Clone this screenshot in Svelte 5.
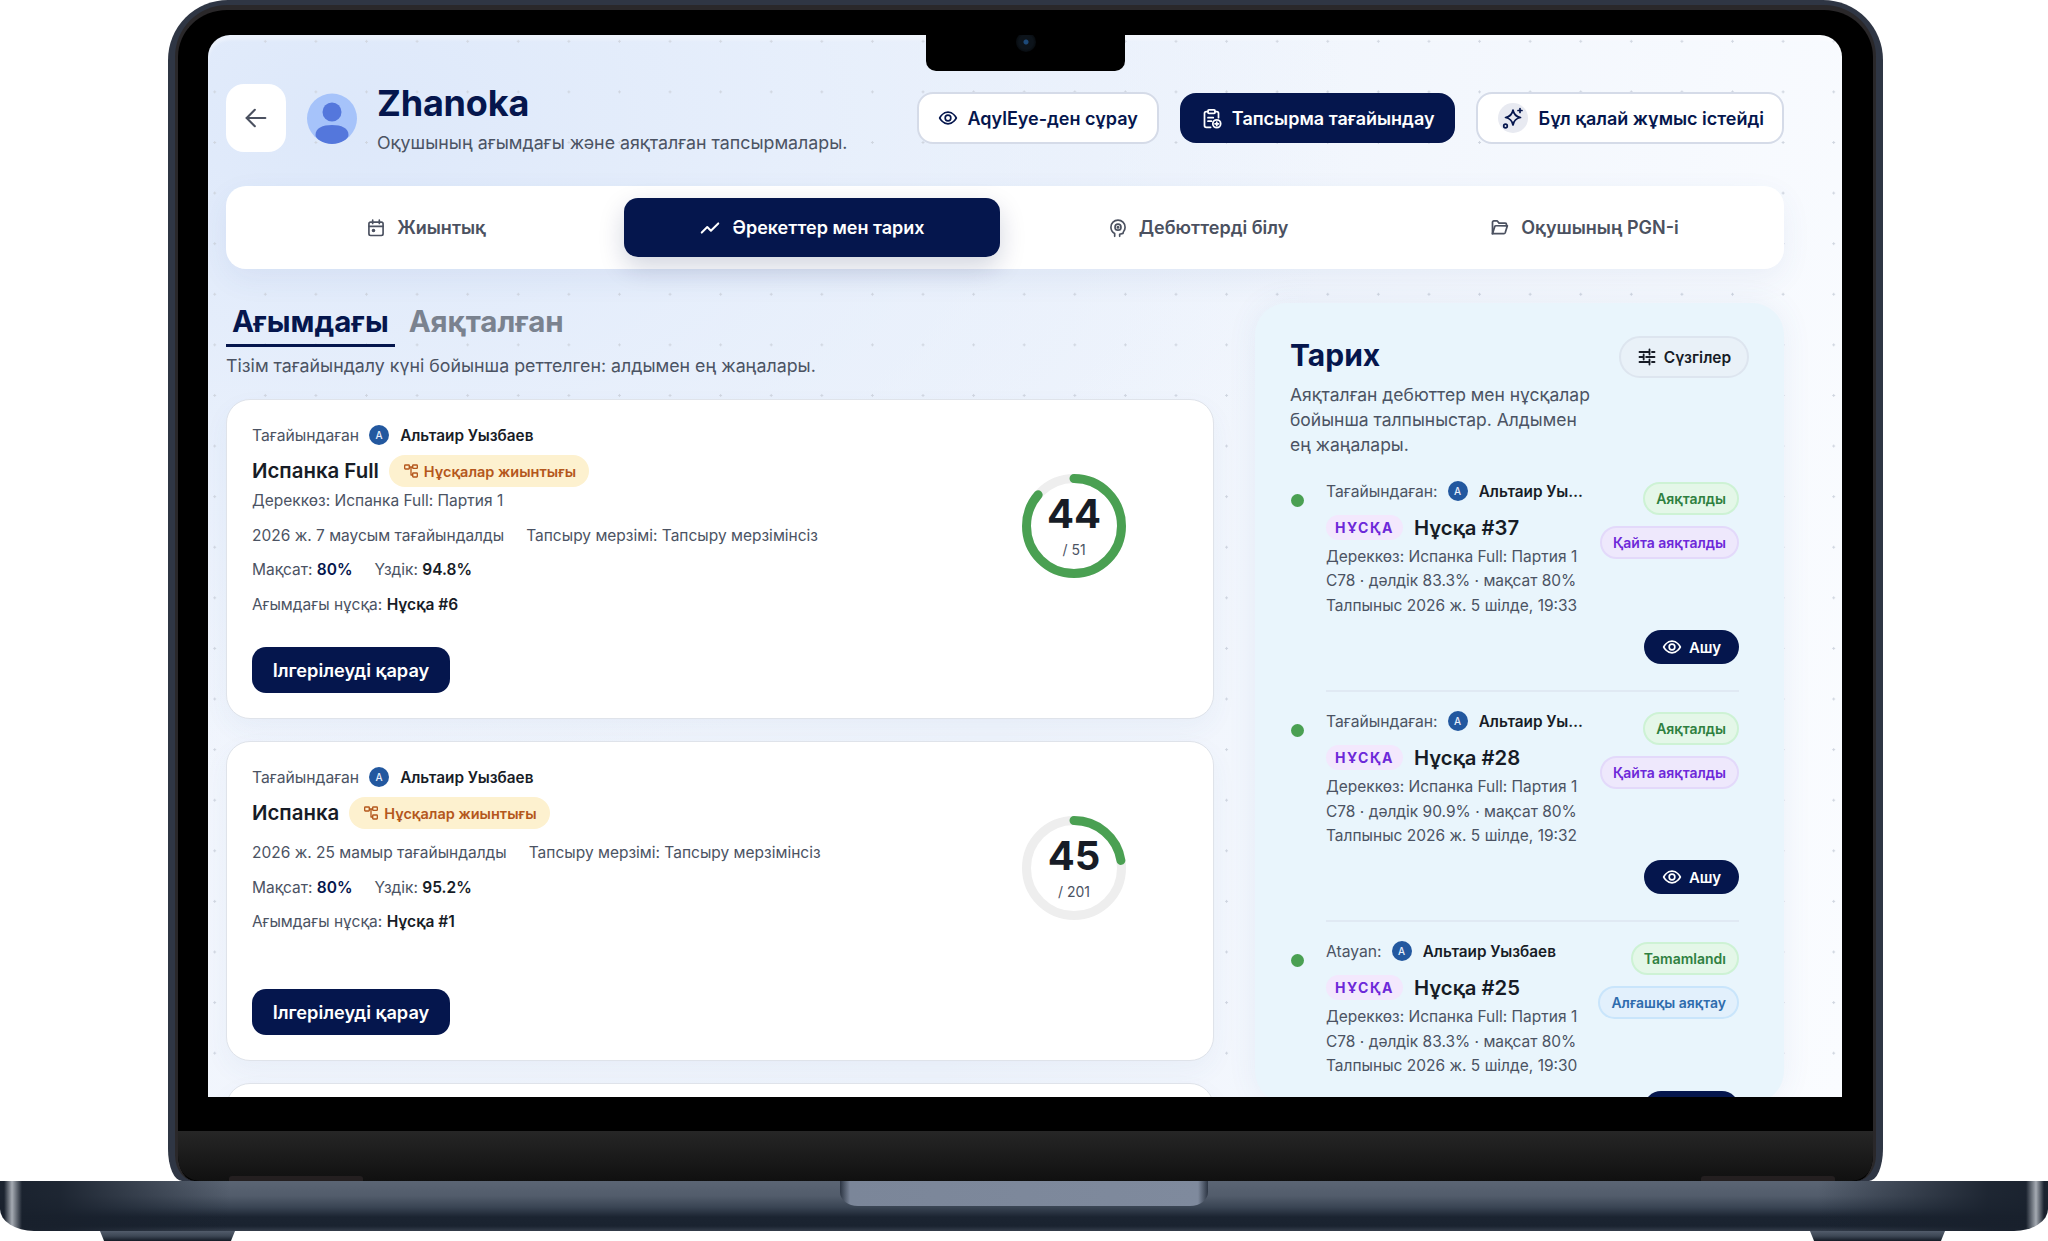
<script>
  const history = [
    { who: 'Тағайындаған:', name: 'Альтаир Уызбаев', title: 'Нұсқа #37', acc: '83.3%', time: '19:33', status: 'Аяқталды', kind: 'Қайта аяқталды', kindClass: 'violet' },
    { who: 'Тағайындаған:', name: 'Альтаир Уызбаев', title: 'Нұсқа #28', acc: '90.9%', time: '19:32', status: 'Аяқталды', kind: 'Қайта аяқталды', kindClass: 'violet' },
    { who: 'Atayan:', name: 'Альтаир Уызбаев', title: 'Нұсқа #25', acc: '83.3%', time: '19:30', status: 'Tamamlandı', kind: 'Алғашқы аяқтау', kindClass: 'blue' }
  ];
  const R = 47.5;
  const C = 2 * Math.PI * R;
  const cards = [
    { title: 'Испанка Full', source: 'Дереккөз: Испанка Full: Партия 1', date: '2026 ж. 7 маусым тағайындалды', best: '94.8%', cur: 'Нұсқа #6', done: 44, total: 51 },
    { title: 'Испанка', source: '', date: '2026 ж. 25 мамыр тағайындалды', best: '95.2%', cur: 'Нұсқа #1', done: 45, total: 201 }
  ];
</script>

{#snippet eye(size)}
  <svg width={size} height={size} viewBox="0 0 24 24" fill="none" stroke="currentColor" stroke-width="2" stroke-linecap="round" stroke-linejoin="round"><path d="M2 12s3.6-7 10-7 10 7 10 7-3.6 7-10 7-10-7-10-7Z"/><circle cx="12" cy="12" r="3.4"/></svg>
{/snippet}

<div class="stage">
  <div class="lid">
    <div class="bezel">
      <div class="glass">
        <div class="screen">
          <header class="head">
            <button class="back" aria-label="back">
              <svg width="28" height="28" viewBox="0 0 24 24" fill="none" stroke="currentColor" stroke-width="1.8" stroke-linecap="round" stroke-linejoin="round"><path d="M20 12H4"/><path d="M11 5l-7 7 7 7"/></svg>
            </button>
            <div class="avatar">
              <svg width="50" height="51" viewBox="0 0 50 51"><circle cx="25" cy="25.500" r="25" fill="#a6c3fa"/><circle cx="25" cy="19" r="9.500" fill="#5477dc"/><path d="M8.500 42c0-7 7-10 16.500-10s16.500 3 16.500 10c0 3.500-7 9-16.500 9S8.500 45.500 8.500 42Z" fill="#5477dc"/></svg>
            </div>
            <div class="who">
              <h1>Zhanoka</h1>
              <p>Оқушының ағымдағы және аяқталған тапсырмалары.</p>
            </div>
            <div class="actions">
              <button class="act light">{@render eye(20)}AqylEye-ден сұрау</button>
              <button class="act dark">
                <svg width="21" height="21" viewBox="0 0 24 24" fill="none" stroke="currentColor" stroke-width="2" stroke-linecap="round" stroke-linejoin="round"><rect x="8" y="2" width="8" height="4" rx="1"/><path d="M16 4h2a2 2 0 0 1 2 2v5"/><path d="M11 22H6a2 2 0 0 1-2-2V6a2 2 0 0 1 2-2h2"/><path d="M8 11h6M8 15h4"/><circle cx="18" cy="18" r="4.500"/><path d="M18 16v4M16 18h4"/></svg>
                Тапсырма тағайындау
              </button>
              <button class="act light wide">
                <span class="spark">
                  <svg width="24" height="24" viewBox="0 0 24 24" fill="none" stroke="currentColor" stroke-width="1.700" stroke-linecap="round" stroke-linejoin="round"><path d="M12 4c.8 4.600 2.900 6.700 7.500 7.500-4.600.8-6.700 2.900-7.500 7.500-.8-4.600-2.900-6.700-7.500-7.500C9.100 10.700 11.200 8.600 12 4Z"/><path d="M19 2.500v4M17 4.500h4"/><circle cx="4.500" cy="20" r="1.800"/></svg>
                </span>
                Бұл қалай жұмыс істейді
              </button>
            </div>
          </header>

          <nav class="tabs">
            <div class="tab">
              <svg width="20" height="20" viewBox="0 0 24 24" fill="none" stroke="currentColor" stroke-width="2" stroke-linecap="round" stroke-linejoin="round"><rect x="3.500" y="5" width="17" height="16" rx="2"/><path d="M8 2.500v4M16 2.500v4M3.500 10h17"/><circle cx="9" cy="15" r="1.200" fill="currentColor"/></svg>
              Жиынтық
            </div>
            <div class="tab on">
              <svg width="22" height="22" viewBox="0 0 24 24" fill="none" stroke="currentColor" stroke-width="2.200" stroke-linecap="round" stroke-linejoin="round"><path d="M3 17l6-6 4 4 8-8"/></svg>
              Әрекеттер мен тарих
            </div>
            <div class="tab">
              <svg width="20" height="20" viewBox="0 0 24 24" fill="none" stroke="currentColor" stroke-width="2" stroke-linecap="round" stroke-linejoin="round"><path d="M8 22v-3.500C5.300 17 3.500 14.300 3.500 11a8.500 8.500 0 0 1 17 0c0 1.800-.6 3.400-1.500 4.800-.7 1.100-1 1.900-1 2.700L14 19.500V22"/><circle cx="12" cy="11" r="3.600"/><circle cx="12" cy="11" r=".8" fill="currentColor"/></svg>
              Дебюттерді білу
            </div>
            <div class="tab">
              <svg width="21" height="21" viewBox="0 0 24 24" fill="none" stroke="currentColor" stroke-width="2" stroke-linecap="round" stroke-linejoin="round"><path d="M4 19V6a1.500 1.500 0 0 1 1.500-1.500H9.500l2 2.500h7A1.500 1.500 0 0 1 20 8.500V10"/><path d="M4 19l2.500-8a1.500 1.500 0 0 1 1.400-1H21l-2.500 8a1.500 1.500 0 0 1-1.400 1H4Z"/></svg>
              Оқушының PGN-і
            </div>
          </nav>

          <main class="main">
            <section class="left">
              <div class="subtabs">
                <span class="sub on">Ағымдағы</span>
                <span class="sub">Аяқталған</span>
              </div>
              <p class="lead">Тізім тағайындалу күні бойынша реттелген: алдымен ең жаңалары.</p>

              {#each cards as c}
                <article class="card">
                  <div class="info">
                    <div class="by">
                      <span>Тағайындаған</span><span class="ava">A</span><b>Альтаир Уызбаев</b>
                    </div>
                    <div class="titleRow">
                      <h3>{c.title}</h3>
                      <span class="set">
                        <svg width="16" height="16" viewBox="0 0 24 24" fill="none" stroke="currentColor" stroke-width="2" stroke-linecap="round" stroke-linejoin="round"><rect x="2.500" y="3" width="7" height="6" rx="1"/><rect x="14.500" y="3" width="7" height="5" rx="1"/><rect x="14.500" y="15" width="7" height="6" rx="1"/><path d="M9.500 6h5M12 6v12h2.500"/></svg>
                        Нұсқалар жиынтығы
                      </span>
                    </div>
                    {#if c.source}<div class="src">{c.source}</div>{/if}
                    <div class="meta"><span>{c.date}</span><span>Тапсыру мерзімі: Тапсыру мерзімінсіз</span></div>
                    <div class="meta"><span>Мақсат: <b class="navy">80%</b></span><span>Үздік: <b>{c.best}</b></span></div>
                    <div class="meta"><span>Ағымдағы нұсқа: <b>{c.cur}</b></span></div>
                    <button class="go">Ілгерілеуді қарау</button>
                  </div>
                  <div class="ring">
                    <svg width="104" height="104" viewBox="0 0 104 104">
                      <circle cx="52" cy="52" r={R} fill="none" stroke="#eeeeee" stroke-width="9"/>
                      <circle cx="52" cy="52" r={R} fill="none" stroke="#4aa052" stroke-width="9" stroke-linecap="round" stroke-dasharray="{C * c.done / c.total} {C}" transform="rotate(-90 52 52)"/>
                    </svg>
                    <div class="num"><strong>{c.done}</strong><small>/ {c.total}</small></div>
                  </div>
                </article>
              {/each}
              <article class="card"></article>
            </section>

            <aside class="panel">
              <div class="panelHead">
                <h2>Тарих</h2>
                <button class="filter">
                  <svg width="20" height="20" viewBox="0 0 24 24" fill="none" stroke="currentColor" stroke-width="2.200" stroke-linecap="round"><path d="M3 6h11M18 6h3M15 3v6M3 12h4M11 12h10M8 9v6M3 18h11M18 18h3M15 15v6"/></svg>
                  Сүзгілер
                </button>
              </div>
              <p class="panelLead">Аяқталған дебюттер мен нұсқалар бойынша талпыныстар. Алдымен ең жаңалары.</p>

              {#each history as h}
                <div class="item">
                  <span class="dot"></span>
                  <div class="body">
                    <div class="top">
                      <div class="details">
                        <div class="byline"><span class="lbl">{h.who}</span><span class="ava">A</span><b>{h.name}</b></div>
                        <div class="verRow"><span class="ver">НҰСҚА</span><h4>{h.title}</h4></div>
                        <div class="line">Дереккөз: Испанка Full: Партия 1</div>
                        <div class="line">C78 · дәлдік {h.acc} · мақсат 80%</div>
                        <div class="line">Талпыныс 2026 ж. 5 шілде, {h.time}</div>
                      </div>
                      <div class="states">
                        <span class="state green">{h.status}</span>
                        <span class="state {h.kindClass}">{h.kind}</span>
                      </div>
                    </div>
                    <div class="openRow"><button class="open">{@render eye(20)}Ашу</button></div>
                  </div>
                </div>
              {/each}
            </aside>
          </main>

          <div class="notch"><span class="cam"></span></div>
        </div>
      </div>
      <div class="chin"><span class="hinge"></span><span class="hinge"></span></div>
    </div>
  </div>
  <div class="base"><span class="dip"></span></div>
  <div class="feet"><span class="foot"></span><span class="foot"></span></div>
</div>

<style>
  :global(body) { margin: 0; background: #fff; }
  * { box-sizing: border-box; }
  button { font: inherit; border: 0; cursor: pointer; }
  h1, h2, h3, h4, p { margin: 0; }

  .stage { width: 2048px; height: 1241px; overflow: hidden; background: #fff; font-family: Inter, "Noto Sans", sans-serif; color: #171c26; display: flex; flex-direction: column; }
  .lid { width: 1715px; height: 1181px; margin-left: 168px; padding: 5px 7px 0; background: #2f3644; border-radius: 60px 60px 14px 14px / 60px 60px 32px 32px; flex: none; }
  .bezel { height: 100%; border: solid #2a282a; border-width: 5px 3px 0; background: #000; border-radius: 52px 52px 20px 20px / 52px 52px 26px 26px; overflow: hidden; display: flex; flex-direction: column; }
  .glass { padding: 25px 31px 34px 30px; flex: none; }
  .chin { flex: 1; background: linear-gradient(#262626, #101010); border-radius: 0 0 22px 22px; display: flex; justify-content: space-between; align-items: flex-end; padding: 0 0 0 51px; }
  .hinge { width: 134px; height: 5px; background: #241f20; border-radius: 3px 3px 0 0; }
  .hinge:last-child { margin-right: 38px; }

  .screen { position: relative; width: 1634px; height: 1062px; overflow: hidden; padding: 49px 58px 0 18px; border-radius: 22px 22px 0 0; box-shadow: inset 0 5px 3px rgba(255,255,255,.35);
    background-color: #f5f8fe;
    background-image: radial-gradient(circle, #d0d6e0 1px, transparent 1.300px), radial-gradient(ellipse 62% 62% at 8% 8%, #dde8fa 0%, rgba(228,237,251,.8) 45%, rgba(245,248,254,0) 100%), linear-gradient(100deg, #f2f6fd 0%, #eff4fc 50%, #fafcff 100%);
    background-size: 50.600px 50.600px, 100% 100%, 100% 100%;
    background-position: 32px -19px, 0 0, 0 0; }
  .notch { position: absolute; left: 718px; top: 0; width: 199px; height: 36px; background: #000; border-radius: 0 0 10px 10px; display: flex; justify-content: center; }
  .cam { width: 20px; height: 20px; margin-top: -3px; border-radius: 50%; background: radial-gradient(circle, #1d4a7a 0 2px, #0d141b 3px 7px, #070b0f 10px); }

  .head { display: flex; align-items: center; height: 68px; }
  .back { width: 60px; height: 68px; background: #fff; border-radius: 18px; color: #4b5160; display: flex; align-items: center; justify-content: center; flex: none; }
  .avatar { margin-left: 21px; height: 51px; flex: none; }
  .who { margin-left: 20px; margin-top: -1px; }
  h1 { font-size: 36px; line-height: 44px; font-weight: 700; color: #05164d; letter-spacing: -.2px; }
  .who p { font-size: 17.800px; line-height: 24px; color: #4b5363; margin-top: 6px; }
  .actions { margin-left: auto; display: flex; align-items: center; gap: 21px; }
  .act { height: 52px; padding: 0 19px; border-radius: 16px; font-size: 18px; font-weight: 600; display: flex; align-items: center; gap: 10px; white-space: nowrap; }
  .act.light { background: #fff; color: #05164d; border: 2px solid #d5dbe8; }
  .act.dark { height: 50px; padding: 0 20px 0 21px; background: #05164d; color: #fff; }
  .act.wide { padding: 0 18px 0 20px; gap: 11px; }
  .spark { width: 30px; height: 30px; border-radius: 50%; background: #e8eaf1; display: flex; align-items: center; justify-content: center; flex: none; }

  .tabs { margin-top: 34px; height: 83px; padding: 12px; background: #fff; border-radius: 20px; display: grid; grid-template-columns: repeat(4, 1fr); gap: 10px; box-shadow: 0 10px 30px rgba(60,90,150,.07); }
  .tab { display: flex; align-items: center; justify-content: center; gap: 11px; font-size: 18px; font-weight: 600; color: #4b5160; border-radius: 14px; }
  .tab.on { background: #05164d; color: #fff; box-shadow: 0 10px 26px rgba(5,22,77,.18); }

  .main { margin-top: 34px; display: grid; grid-template-columns: 988px 529px; gap: 41px; align-items: start; }
  .subtabs { display: flex; gap: 8px; height: 44px; }
  .sub { height: 44px; padding: 0 6px; font-size: 29.500px; line-height: 36px; font-weight: 700; color: #7a828f; }
  .sub.on { color: #05164d; border-bottom: 3px solid #05164d; }
  .lead { font-size: 17.800px; line-height: 24px; color: #4b5363; margin-top: 7px; }

  .card { position: relative; height: 320px; margin-top: 22px; background: #fff; border: 1px solid #dfe3ea; border-radius: 24px; padding: 24px 25px 24px; display: flex; justify-content: space-between; box-shadow: 0 10px 26px rgba(60,90,150,.05); }
  .lead + .card { margin-top: 21px; }
  .info { display: flex; flex-direction: column; align-items: flex-start; height: 100%; }
  .by { display: flex; align-items: center; height: 22px; font-size: 15.700px; color: #4b5363; }
  .by b { font-size: 15.300px; font-weight: 600; color: #171c26; margin-left: 11px; }
  .ava { width: 20px; height: 20px; margin-left: 10px; border-radius: 50%; background: #23589f; color: #e6eefb; font-size: 10px; font-weight: 500; display: flex; align-items: center; justify-content: center; flex: none; }
  .titleRow { display: flex; align-items: center; gap: 10px; margin-top: 9px; }
  h3 { font-size: 20.400px; font-weight: 600; color: #171c26; line-height: 32px; }
  .set { height: 32px; padding: 0 13px 0 14px; border-radius: 16px; background: #fdf1cf; color: #b4571c; font-size: 14.500px; font-weight: 600; display: flex; align-items: center; gap: 5px; }
  .src { font-size: 15.500px; line-height: 24px; color: #4b5363; margin-top: 2px; }
  .meta { display: flex; gap: 22px; font-size: 15.500px; line-height: 24px; color: #4b5363; margin-top: 10.500px; }
  .titleRow + .meta { margin-top: 12px; }
  .meta b { font-weight: 600; color: #171c26; }
  .meta b.navy { color: #05164d; }
  .go { margin-top: auto; height: 46px; margin-bottom: 1px; width: 198px; background: #05164d; color: #fff; border-radius: 14px; font-size: 18.200px; font-weight: 600; }
  .ring { position: relative; width: 104px; height: 104px; margin: 50px 62px 0 0; flex: none; }
  .num { position: absolute; inset: 0; display: flex; flex-direction: column; align-items: center; justify-content: center; }
  .num strong { font-size: 40px; line-height: 42px; font-weight: 700; color: #171c26; }
  .num small { font-size: 14px; line-height: 20px; color: #4b5363; margin-top: 5px; }

  .panel { height: 800px; background: #e9f5fc; border-radius: 32px; padding: 33px 45px 0 35px; box-shadow: 0 0 30px rgba(70,100,170,.08); }
  .panelHead { display: flex; justify-content: space-between; align-items: flex-start; height: 42px; margin-right: -10px; }
  h2 { font-size: 30px; line-height: 38px; font-weight: 700; color: #05164d; }
  .filter { width: 130px; height: 42px; border-radius: 21px; border: 2px solid #dde5ef; background: #e9f1f8; color: #171c26; font-size: 15.500px; font-weight: 600; display: flex; align-items: center; justify-content: center; gap: 7px; }
  .panelLead { font-size: 17.500px; line-height: 25px; color: #4b5363; width: 310px; margin-top: 4px; }

  .item { display: flex; gap: 23px; margin-top: 23px; }
  .item + .item { margin-top: 18px; }
  .dot { width: 13px; height: 13px; border-radius: 50%; background: #4aa052; margin-top: 14px; flex: none; margin-left: 1px; margin-right: -1px; }
  .body { flex: 1; min-width: 0; border-bottom: 2px solid #e0e9f3; padding-bottom: 26px; }
  .top { display: flex; justify-content: space-between; }
  .details { width: 257px; flex: none; }
  .byline { display: flex; align-items: center; height: 22px; font-size: 15.700px; color: #4b5363; }
  .lbl { flex: none; }
  .byline b { font-size: 15.300px; font-weight: 600; color: #171c26; margin-left: 11px; min-width: 0; overflow: hidden; text-overflow: ellipsis; white-space: nowrap; }
  .verRow { display: flex; align-items: center; gap: 11px; margin-top: 13px; height: 25px; }
  .ver { width: 77px; height: 25px; border-radius: 13px; background: #f3e8fd; color: #6d28d9; font-size: 14px; font-weight: 700; letter-spacing: 1.500px; display: flex; align-items: center; justify-content: center; flex: none; }
  h4 { font-size: 20.300px; font-weight: 600; color: #171c26; line-height: 25px; white-space: nowrap; }
  .line { font-size: 15.500px; line-height: 24.400px; color: #4b5363; white-space: nowrap; }
  .verRow + .line { margin-top: 5px; }
  .states { display: flex; flex-direction: column; align-items: flex-end; gap: 11px; margin-top: 2px; }
  .state { height: 33px; padding: 0 11px; border-radius: 17px; font-size: 14px; font-weight: 600; display: flex; align-items: center; white-space: nowrap; border: 2px solid; }
  .state.green { background: #e4f7e8; border-color: #cdf2d4; color: #2f8040; }
  .state.violet { background: #eee8fc; border-color: #e3d9fa; color: #6d28d9; }
  .state.blue { background: #e2f0fc; border-color: #c9e5fb; color: #2f6cad; }
  .openRow { display: flex; justify-content: flex-end; margin-top: 12px; }
  .open { width: 95px; height: 34px; border-radius: 17px; background: #05164d; color: #fff; font-size: 15px; font-weight: 600; display: flex; align-items: center; justify-content: center; gap: 7px; }

  .base { width: 2048px; height: 50px; flex: none; display: flex; justify-content: center; border-radius: 0 0 34px 34px / 0 0 22px 22px;
    background:
      linear-gradient(90deg, rgba(190,195,202,0) 4px, rgba(190,195,202,.85) 12px, rgba(190,195,202,0) 22px, rgba(0,0,0,0) 2026px, rgba(190,195,202,.85) 2036px, rgba(190,195,202,0) 2044px),
      linear-gradient(90deg, rgba(24,32,44,.95) 22px, rgba(24,32,44,.9) 60px, rgba(24,32,44,0) 230px, rgba(24,32,44,0) 1818px, rgba(24,32,44,.9) 1988px, rgba(24,32,44,.95) 2026px),
      linear-gradient(#5b6574 0, #525c6b 30%, #3a4554 52%, #1b2431 72%, #1a2330 90%, #343d4b 100%); }
  .dip { width: 368px; height: 25px; border-radius: 0 0 18px 18px / 0 0 14px 14px; background: linear-gradient(90deg, #2c3543 0, #7b8699 10px, #7f8a9d calc(100% - 10px), #2c3543 100%); }
  .feet { display: flex; justify-content: space-between; padding: 0 103px 0 100px; height: 10px; flex: none; }
  .foot { width: 135px; height: 10px; clip-path: polygon(0 0, 100% 0, 97% 100%, 3% 100%); background: linear-gradient(#525c6b 0, #3d4755 50%, #141b26 100%); }
</style>
